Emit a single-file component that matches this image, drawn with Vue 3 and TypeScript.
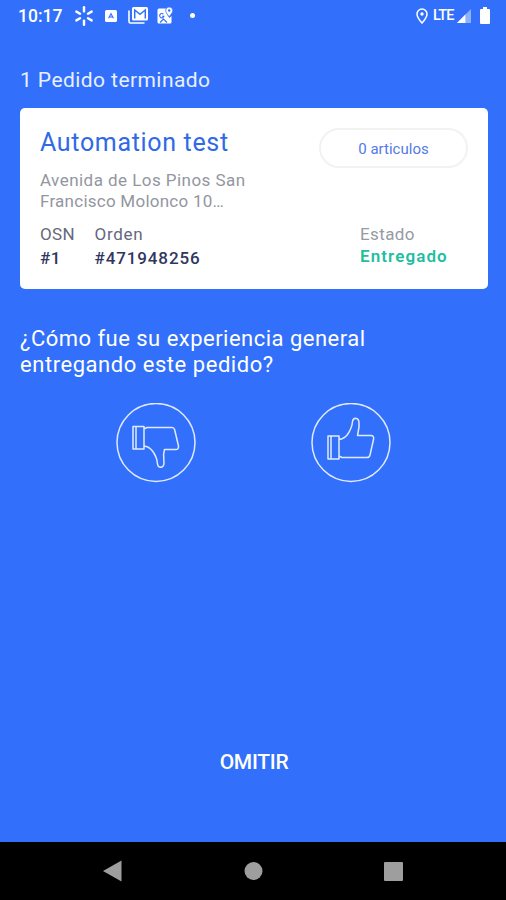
<script setup lang="ts">
interface Order {
  store: string
  items: string
  address: string[]
  osn: string
  id: string
  status: string
}

const order: Order = {
  store: 'Automation test',
  items: '0 articulos',
  address: ['Avenida de Los Pinos San', 'Francisco Molonco 10…'],
  osn: '#1',
  id: '#471948256',
  status: 'Entregado',
}
const rays: number[] = [0, 60, 120, 180, 240, 300]
</script>

<template>
  <div class="screen">
    <header class="status">
      <span class="clock">10:17</span>
      <svg class="spark" width="20" height="22" viewBox="-10 -11 20 22">
        <path v-for="angle in rays" :key="angle" d="M0-4.6V-8.8" :transform="`rotate(${angle})`" />
      </svg>
      <svg class="app" width="12" height="12" viewBox="0 0 12 12">
        <rect width="12" height="12" rx="1.5" fill="#fff" />
        <path d="M3.6 8.3 6 3.7l2.4 4.6M4.5 7h3" fill="none" stroke="#3270fc" stroke-width="1.1" />
      </svg>
      <svg class="mail" width="20" height="17" viewBox="0 0 20 17">
        <path d="M1 3.5V14.5Q1 16 2.5 16H16.5" fill="none" stroke="#fff" stroke-width="1.6" />
        <rect x="4" y="0" width="16" height="13.5" rx="1.5" fill="#fff" />
        <path d="M6.7 11.5V3l5.3 4.4L17.3 3v8.5" fill="none" stroke="#3270fc" stroke-width="1.5" />
      </svg>
      <svg class="maps" width="16" height="17" viewBox="0 0 16 17">
        <path d="M2 1.5H9Q8 5 11 9l1.5 2L14.5 9V15q0 1.5-1.5 1.5H2Q.5 16.5 .5 15V3Q.5 1.5 2 1.5" fill="#fff" />
        <path d="M12.2 0a3.5 3.5 0 0 1 3.5 3.5C15.7 6 12.2 9.5 12.2 9.5S8.700 6 8.700 3.5A3.5 3.5 0 0 1 12.2 0" fill="#fff" stroke="#3270fc" stroke-width=".7" />
        <circle cx="12.2" cy="3.5" r="1.2" fill="#3270fc" />
        <path d="M6.5 7.2A2.2 2.2 0 1 0 7 9.2H5M3 15.500 6.5 12l3.500 3.500" fill="none" stroke="#3270fc" stroke-width="1.1" />
      </svg>
      <i class="dot"></i>
      <div class="signals">
        <svg width="12" height="16" viewBox="0 0 12 16">
          <path d="M6 1a5 5 0 0 1 5 5C11 9.5 6 15 6 15S1 9.5 1 6A5 5 0 0 1 6 1" fill="none" stroke="#fff" stroke-width="1.5" />
          <circle cx="6" cy="6" r="1.7" fill="#fff" />
        </svg>
        <span class="lte">LTE</span>
        <svg class="bars" width="14" height="14" viewBox="0 0 15 15">
          <path d="M15 0V15H0Z" fill="#8eb1fd" />
          <path d="M9 6V15H0Z" fill="#fff" />
        </svg>
        <svg class="battery" width="10" height="17" viewBox="0 0 10 17">
          <path d="M3 0H7V2H9Q10 2 10 3V16Q10 17 9 17H1Q0 17 0 16V3Q0 2 1 2H3Z" fill="#fff" />
        </svg>
      </div>
    </header>

    <main class="content">
      <h1 class="heading">1 Pedido terminado</h1>
      <section class="card">
        <div class="top">
          <div>
            <h2 class="store">{{ order.store }}</h2>
            <p v-for="(line, index) in order.address" :key="index" class="address" :class="{ second: index === 1 }">{{ line }}</p>
          </div>
          <span class="pill">{{ order.items }}</span>
        </div>
        <div class="details">
          <div class="osn"><div class="label osn-label">OSN</div><div class="value">{{ order.osn }}</div></div>
          <div class="number"><div class="label">Orden</div><div class="value order-value">{{ order.id }}</div></div>
          <div class="state"><div class="label state-label">Estado</div><div class="delivered">{{ order.status }}</div></div>
        </div>
      </section>
      <p class="question">¿Cómo fue su experiencia general</p>
      <p class="question last">entregando este pedido?</p>
      <div class="ratings">
        <button class="rate" aria-label="Mala">
          <svg width="80" height="80" viewBox="0 0 80 80">
            <circle cx="40" cy="39.5" r="39" />
            <path d="M17 23.5H28V46H17ZM20 23.500V46M28 26 31 24.500H56Q58 24.500 58.600 26.500L62.500 43Q62.700 46.500 60 46.500H48.500L47.600 51.500 48 60Q47.800 64.200 44.500 64.300Q42 64.200 41.500 61Q41 54 36.500 48Q33 43.500 28 43" />
          </svg>
        </button>
        <button class="rate" aria-label="Buena">
          <svg width="80" height="80" viewBox="0 0 80 80">
            <circle cx="40" cy="39.5" r="39" />
            <path d="M17 33H28V56H17ZM20 33V56M28 36.500Q33 36 36.500 31.500Q41 25 41.500 18.500Q42 15.200 44.500 15.200Q48 15.500 48 20V24L46.500 32.500H60Q63 32.500 62.600 36L59 52Q58.500 54.500 56 54.500H31L28 53" />
          </svg>
        </button>
      </div>
      <button class="skip">OMITIR</button>
    </main>

    <nav class="nav">
      <svg width="506" height="58" viewBox="0 0 506 58" fill="#9e9e9e">
        <path d="M103 29 121.500 18.500V39.500Z" />
        <circle cx="253.500" cy="29" r="9" />
        <rect x="384" y="20" width="19" height="19" rx="1" />
      </svg>
    </nav>
  </div>
</template>

<style>
body { margin: 0; }
</style>
<style scoped>
.screen { width: 506px; height: 900px; display: flex; flex-direction: column; overflow: hidden; background: #3270fc; color: #fff; font-family: Roboto, sans-serif; }
.status { box-sizing: border-box; height: 31px; padding: 0 16px 0 18px; display: flex; align-items: center; flex: none; }
.clock { width: 44px; font-size: 17.5px; line-height: 32px; font-weight: 500; white-space: nowrap; }
.spark { margin-left: 12px; fill: none; stroke: #fff; stroke-width: 2.4; stroke-linecap: round; }
.app { margin-left: 11px; }
.mail { margin-left: 11px; }
.maps { margin-left: 9px; }
.dot { width: 5px; height: 5px; margin-left: 17px; border-radius: 50%; background: #fff; }
.signals { display: flex; align-items: center; margin-left: auto; }
.lte { width: 22px; margin-left: 5px; font-size: 14.5px; letter-spacing: -.8px; font-weight: 500; }
.bars { margin-left: 2px; }
.battery { margin-left: 9px; }
.content { flex: 1; display: flex; flex-direction: column; padding: 33px 18px 0 20px; }
h1, h2, p { margin: 0; font-weight: 400; white-space: nowrap; }
.heading { height: 44px; font-size: 21px; line-height: 32px; letter-spacing: .43px; color: #e8efff; }
.card { box-sizing: border-box; height: 181px; border-radius: 5px; padding: 20px; background: #fff; }
.top { display: flex; justify-content: space-between; height: 94px; }
.store { height: 42px; font-size: 25px; line-height: 30px; letter-spacing: .67px; color: #2f69e6; }
.address { font-size: 17px; line-height: 21px; letter-spacing: .45px; color: #93969f; }
.address.second { letter-spacing: .25px; line-height: 20px; }
.pill { box-sizing: border-box; width: 149px; height: 40px; border: 2px solid #f2f2f2; border-radius: 20px; font-size: 15px; line-height: 38px; text-align: center; color: #5379eb; }
.details { display: flex; line-height: 24px; font-size: 17px; white-space: nowrap; }
.osn { width: 54.5px; }
.label { color: #65687d; letter-spacing: .7px; }
.osn-label { letter-spacing: .3px; }
.value { color: #303660; font-weight: 500; letter-spacing: .6px; }
.order-value { letter-spacing: .88px; }
.state { width: 88px; margin: 0 20px 0 auto; }
.state-label { color: #969aa3; letter-spacing: .4px; }
.delivered { line-height: 20px; font-weight: 600; letter-spacing: 1.1px; color: #1fbea1; }
.question { margin-top: 37px; font-size: 22px; line-height: 26px; letter-spacing: .48px; }
.question.last { margin-top: 0; letter-spacing: .54px; }
.ratings { display: flex; gap: 115px; margin: 25px 0 0 96px; }
button { padding: 0; border: 0; background: none; color: #fff; font-family: inherit; }
.rate { width: 80px; height: 80px; }
.rate svg { display: block; fill: none; stroke: #dfeaff; stroke-width: 1.5; stroke-linejoin: round; }
.skip { width: 120px; margin: 263px 0 0 174px; font-size: 21px; line-height: 32px; font-weight: 500; letter-spacing: -.3px; }
.nav { height: 58px; flex: none; background: #000; }
.nav svg { display: block; }
</style>
